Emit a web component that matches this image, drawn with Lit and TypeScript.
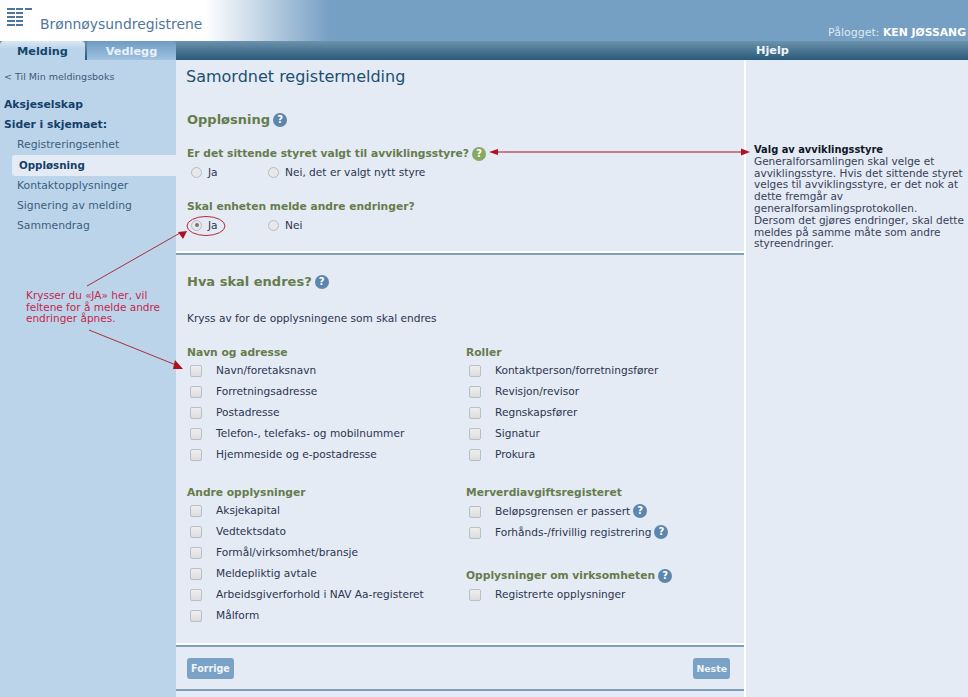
import { LitElement, html, css, svg } from "lit";
import { customElement } from "lit/decorators.js";

const help = (green = false) => html`<span class="q ${green ? "green" : ""}">?</span>`;
const check = (label: string, q = false) => html`<div class="row"><span class="cb"></span><span class="cl">${label}</span>${q ? help() : ""}</div>`;
const radio = (label: string, on = false) => html`<span class="ropt"><span class="rd ${on ? "on" : ""}"></span>${label}</span>`;

@customElement("app-root")
export class AppRoot extends LitElement {
  static styles = css`
    :host { display: block; position: relative; width: 968px; height: 697px; overflow: hidden; background: #e4ebf4; font-family: "DejaVu Sans", Verdana, sans-serif; font-size: 10.6px; color: #2c3550; }
    .top { height: 41px; display: flex; justify-content: space-between; background: linear-gradient(90deg, #fff 0, #fff 205px, #769fc4 330px, #769fc4 100%); }
    .logo { display: flex; align-items: flex-start; padding: 8px 0 0 7px; gap: 7px; }
    .brand { font-size: 13.9px; color: #50779b; margin-top: 8px; }
    .user { align-self: flex-end; color: #dfe8f2; font-size: 11px; padding: 0 2px 2px 0; white-space: nowrap; }
    .user b { color: #fff; font-size: 10.8px; }
    .tabs { height: 19px; display: flex; background: linear-gradient(180deg, #6c92ac, #2a5a7a); }
    .tab { height: 19px; padding-top: 1px; display: flex; align-items: center; justify-content: center; font-weight: 700; font-size: 11.3px; border-radius: 4px 4px 0 0; box-sizing: border-box; }
    .tab.a { width: 85px; background: linear-gradient(180deg, #dbe8f4, #bcd4ea 40%); color: #14486b; }
    .tab.b { width: 89px; margin-left: 2px; background: linear-gradient(180deg, #6f9cc4, #9fc2e0); color: #e8f0f8; }
    .hjelp { margin-left: 580px; color: #eef4fa; font-weight: 700; font-size: 11.3px; line-height: 19px; }
    .body { display: flex; height: 637px; }
    .side { width: 176px; flex: none; background: #bcd4ea; color: #3a5f80; }
    .back { font-size: 9.5px; padding: 11px 0 0 4px; line-height: 12px; color: #3c5a76; }
    .side h3 { margin: 0; font-size: 10.8px; font-weight: 700; color: #14406a; line-height: 20px; padding-left: 4px; }
    .side h3.first { margin-top: 12px; }
    .nav { font-size: 10.8px; padding-left: 17px; line-height: 20.25px; height: 20.25px; }
    .nav.cur { margin-left: 12px; padding-left: 7px; background: #e4ebf4; font-weight: 700; color: #14406a; border-radius: 3px 0 0 3px; font-size: 10.3px; }
    .note { margin: 54px 0 0 26px; color: #c4284a; font-size: 10.5px; line-height: 11.5px; width: 150px; }
    .main { width: 568px; flex: none; }
    .title { font-size: 16px; color: #1d4f70; padding: 7px 0 0 10px; line-height: 19px; }
    h2 { margin: 0; display: flex; align-items: center; gap: 3px; font-size: 13px; font-weight: 700; color: #667c4c; line-height: 18px; }
    .sec { padding: 0 11px; }
    .sec h2.o { margin-top: 25px; }
    .ask { display: flex; align-items: center; gap: 3px; font-weight: 700; font-size: 10.7px; color: #667c4c; line-height: 14px; }
    .ask.a1 { margin-top: 18px; }
    .ask.a2 { margin-top: 21px; }
    .radios { display: flex; margin-top: 4px; padding-left: 4px; line-height: 14px; height: 14px; }
    .ropt { display: inline-flex; align-items: center; gap: 6px; width: 77px; white-space: nowrap; }
    .rd { width: 9px; height: 9px; border-radius: 50%; background: #e8e8e8; border: 1px solid #b5bcc4; display: inline-flex; align-items: center; justify-content: center; flex: none; }
    .rd.on::after { content: ""; width: 4px; height: 4px; border-radius: 50%; background: #777; }
    .div { height: 2px; background: #7f9fb8; border-top: 2px solid #fff; }
    .div.d1 { margin-top: 19px; }
    .div.d2 { margin-top: 21px; }
    .div.d3 { border-top: 0; }
    h2.h { margin-top: 18px; }
    .intro { margin-top: 20px; line-height: 14px; }
    .cols { display: grid; grid-template-columns: 279px 1fr; margin-top: 21px; }
    .col h4 { margin: 0; display: flex; align-items: center; gap: 3px; font-size: 10.7px; font-weight: 700; color: #667c4c; line-height: 14px; }
    .col .gap1 { margin-top: 25px; }
    .col .gap2 { margin-top: 30px; }
    .rows { display: flex; flex-direction: column; gap: 7px; margin-top: 3px; }
    .rows.m { margin-top: 4px; }
    .row { display: flex; align-items: center; height: 14px; white-space: nowrap; }
    .cb { width: 10px; height: 10px; border-radius: 2px; background: linear-gradient(180deg, #eee, #ddd); border: 1px solid #b9bfc6; margin: 1px 14px 0 3px; flex: none; }
    .cl { margin-right: 3px; }
    .q { display: inline-flex; align-items: center; justify-content: center; width: 14px; height: 14px; border-radius: 50%; background: #5d86ad; color: #fff; font-weight: 700; font-size: 10px; flex: none; line-height: 1; }
    .q.green { background: #89a862; }
    .foot { display: flex; justify-content: space-between; padding: 11px 14px 10px 11px; }
    .btn { height: 21px; display: flex; align-items: center; padding: 0 4px; background: #7aa2c6; color: #eef4fa; font-weight: 700; font-size: 9.6px; border-radius: 3px; }
    .btn.next { padding: 0 3px; font-size: 9.4px; }
    .help { flex: 1; border-left: 2px solid #fff; padding: 84px 0 0 8px; font-size: 10.5px; line-height: 11.8px; color: #39415a; white-space: nowrap; }
    .help b { color: #101828; display: block; font-size: 9.9px; }
    .over { position: absolute; left: 0; top: 0; pointer-events: none; }
  `;

  render() {
    return html`
      <div class="top">
        <div class="logo">
          <svg width="26" height="20" viewBox="0 0 26 20" fill="#50779b">
            <rect x="0" y="0" width="8" height="2"/><rect x="9" y="0" width="7" height="2"/><rect x="18" y="0" width="7" height="2"/>
            <rect x="0" y="4" width="8" height="2"/><rect x="9" y="4" width="7" height="2"/>
            <rect x="0" y="8" width="8" height="2"/><rect x="9" y="8" width="7" height="2"/>
            <rect x="0" y="12" width="8" height="2"/><rect x="9" y="12" width="7" height="2"/>
            <rect x="0" y="16" width="8" height="2"/><rect x="9" y="16" width="7" height="2"/>
          </svg>
          <span class="brand">Brønnøysundregistrene</span>
        </div>
        <div class="user">Pålogget: <b>KEN JØSSANG</b></div>
      </div>
      <div class="tabs">
        <div class="tab a">Melding</div><div class="tab b">Vedlegg</div><div class="hjelp">Hjelp</div>
      </div>
      <div class="body">
        <div class="side">
          <div class="back">&lt; Til Min meldingsboks</div>
          <h3 class="first">Aksjeselskap</h3>
          <h3>Sider i skjemaet:</h3>
          <div class="nav">Registreringsenhet</div>
          <div class="nav cur">Oppløsning</div>
          <div class="nav">Kontaktopplysninger</div>
          <div class="nav">Signering av melding</div>
          <div class="nav">Sammendrag</div>
          <div class="note">Krysser du «JA» her, vil<br>feltene for å melde andre<br>endringer åpnes.</div>
        </div>
        <div class="main">
          <div class="title">Samordnet registermelding</div>
          <div class="sec">
            <h2 class="o">Oppløsning ${help()}</h2>
            <div class="ask a1">Er det sittende styret valgt til avviklingsstyre? ${help(true)}</div>
            <div class="radios">${radio("Ja")}${radio("Nei, det er valgt nytt styre")}</div>
            <div class="ask a2">Skal enheten melde andre endringer?</div>
            <div class="radios">${radio("Ja", true)}${radio("Nei")}</div>
          </div>
          <div class="div d1"></div>
          <div class="sec">
            <h2 class="h">Hva skal endres? ${help()}</h2>
            <div class="intro">Kryss av for de opplysningene som skal endres</div>
            <div class="cols">
              <div class="col">
                <h4>Navn og adresse</h4>
                <div class="rows">${["Navn/foretaksnavn","Forretningsadresse","Postadresse","Telefon-, telefaks- og mobilnummer","Hjemmeside og e-postadresse"].map((l) => check(l))}</div>
                <h4 class="gap1">Andre opplysninger</h4>
                <div class="rows">${["Aksjekapital","Vedtektsdato","Formål/virksomhet/bransje","Meldepliktig avtale","Arbeidsgiverforhold i NAV Aa-registeret","Målform"].map((l) => check(l))}</div>
              </div>
              <div class="col">
                <h4>Roller</h4>
                <div class="rows">${["Kontaktperson/forretningsfører","Revisjon/revisor","Regnskapsfører","Signatur","Prokura"].map((l) => check(l))}</div>
                <h4 class="gap1">Merverdiavgiftsregisteret</h4>
                <div class="rows m">${check("Beløpsgrensen er passert", true)}${check("Forhånds-/frivillig registrering", true)}</div>
                <h4 class="gap2">Opplysninger om virksomheten ${help()}</h4>
                <div class="rows m">${check("Registrerte opplysninger")}</div>
              </div>
            </div>
          </div>
          <div class="div d2"></div>
          <div class="foot"><span class="btn">Forrige</span><span class="btn next">Neste</span></div>
          <div class="div d3"></div>
        </div>
        <div class="help">
          <b>Valg av avviklingsstyre</b>Generalforsamlingen skal velge et<br>avviklingsstyre. Hvis det sittende styret<br>velges til avviklingsstyre, er det nok at<br>dette fremgår av<br>generalforsamlingsprotokollen.<br>Dersom det gjøres endringer, skal dette<br>meldes på samme måte som andre<br>styreendringer.
        </div>
      </div>
      <svg class="over" width="968" height="697" fill="#b01020" stroke="none">
        ${svg`
        <line x1="497" y1="152" x2="745" y2="152" stroke="#a8101c" stroke-width="1"/>
        <polygon points="489,152 498,149 498,155"/>
        <polygon points="750,152 741,148.5 741,155.5"/>
        <ellipse cx="206" cy="226" rx="19" ry="9.5" fill="none" stroke="#b8283a" stroke-width="1"/>
        <line x1="87" y1="286" x2="180" y2="233" stroke="#a8303c" stroke-width="1"/>
        <polygon points="187,231 178,232 183,239"/>
        <line x1="89" y1="330" x2="176" y2="365" stroke="#a8303c" stroke-width="1"/>
        <polygon points="183,369 175,360 173,369"/>
        `}
      </svg>
    `;
  }
}
